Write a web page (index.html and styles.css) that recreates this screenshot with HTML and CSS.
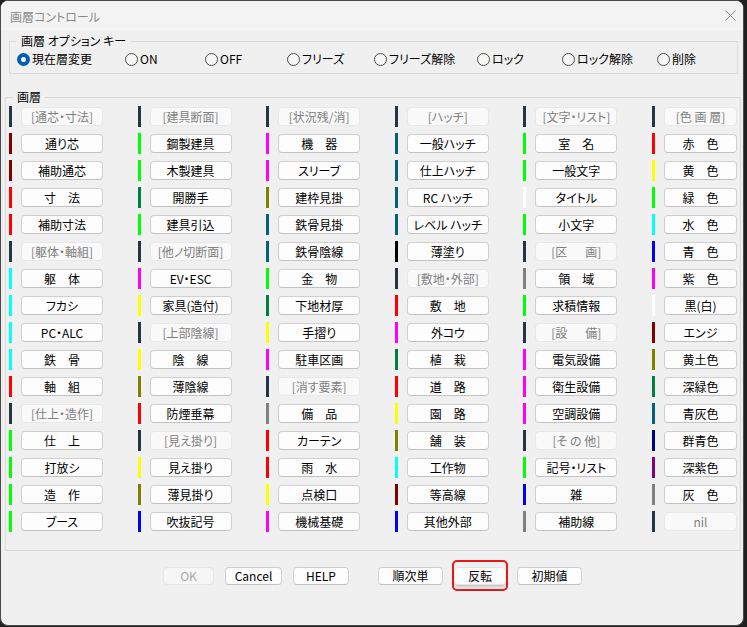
FILE: index.html
```html
<!DOCTYPE html>
<html>
<head>
    <meta charset="UTF-8">
    <title>画層コントロール</title>
    <link rel="stylesheet" href="styles.css">
</head>
<body>
    <div class="window">
        <div class="titlebar">
            <span class="title">画層コントロール</span>
            <span class="close">
                <svg width="11" height="11" viewBox="0 0 11 11"><path d="M0.5 0.5L10.5 10.5M10.5 0.5L0.5 10.5" stroke="#8a8a8a" stroke-width="1" fill="none"/></svg>
            </span>
        </div>

        <fieldset class="options">
            <legend>画層 オプション キー</legend>
            <div class="radios">
                <label class="radio"><span class="dot on"></span>現在層変更</label>
                <label class="radio"><span class="dot"></span>ON</label>
                <label class="radio"><span class="dot"></span>OFF</label>
                <label class="radio"><span class="dot"></span>フリーズ</label>
                <label class="radio"><span class="dot"></span>フリーズ解除</label>
                <label class="radio"><span class="dot"></span>ロック</label>
                <label class="radio"><span class="dot"></span>ロック解除</label>
                <label class="radio"><span class="dot"></span>削除</label>
            </div>
        </fieldset>

        <fieldset class="layers">
            <legend>画層</legend>
            <div class="cols">
                <div class="col">
                    <div class="row"><i class="bar c-dark"></i><button class="btn head">[通芯・寸法]</button></div>
                    <div class="row"><i class="bar c-maroon"></i><button class="btn">通り芯</button></div>
                    <div class="row"><i class="bar c-maroon"></i><button class="btn">補助通芯</button></div>
                    <div class="row"><i class="bar c-red"></i><button class="btn">寸　法</button></div>
                    <div class="row"><i class="bar c-red"></i><button class="btn">補助寸法</button></div>
                    <div class="row"><i class="bar c-dark"></i><button class="btn head">[躯体・軸組]</button></div>
                    <div class="row"><i class="bar c-cyan"></i><button class="btn">躯　体</button></div>
                    <div class="row"><i class="bar c-cyan"></i><button class="btn">フカシ</button></div>
                    <div class="row"><i class="bar c-cyan"></i><button class="btn">PC・ALC</button></div>
                    <div class="row"><i class="bar c-cyan"></i><button class="btn">鉄　骨</button></div>
                    <div class="row"><i class="bar c-red"></i><button class="btn">軸　組</button></div>
                    <div class="row"><i class="bar c-dark"></i><button class="btn head">[仕上・造作]</button></div>
                    <div class="row"><i class="bar c-green"></i><button class="btn">仕　上</button></div>
                    <div class="row"><i class="bar c-green"></i><button class="btn">打放シ</button></div>
                    <div class="row"><i class="bar c-green"></i><button class="btn">造　作</button></div>
                    <div class="row"><i class="bar c-green"></i><button class="btn">ブース</button></div>
                </div>
                <div class="col">
                    <div class="row"><i class="bar c-dark"></i><button class="btn head">[建具断面]</button></div>
                    <div class="row"><i class="bar c-green"></i><button class="btn">鋼製建具</button></div>
                    <div class="row"><i class="bar c-green"></i><button class="btn">木製建具</button></div>
                    <div class="row"><i class="bar c-dkgreen"></i><button class="btn">開勝手</button></div>
                    <div class="row"><i class="bar c-green"></i><button class="btn">建具引込</button></div>
                    <div class="row"><i class="bar c-dark"></i><button class="btn head">[他ノ切断面]</button></div>
                    <div class="row"><i class="bar c-magenta"></i><button class="btn">EV・ESC</button></div>
                    <div class="row"><i class="bar c-yellow"></i><button class="btn">家具(造付)</button></div>
                    <div class="row"><i class="bar c-dark"></i><button class="btn head">[上部陰線]</button></div>
                    <div class="row"><i class="bar c-yellow"></i><button class="btn">陰　線</button></div>
                    <div class="row"><i class="bar c-olive"></i><button class="btn">薄陰線</button></div>
                    <div class="row"><i class="bar c-red"></i><button class="btn">防煙垂幕</button></div>
                    <div class="row"><i class="bar c-dark"></i><button class="btn head">[見え掛り]</button></div>
                    <div class="row"><i class="bar c-yellow"></i><button class="btn">見え掛り</button></div>
                    <div class="row"><i class="bar c-olive"></i><button class="btn">薄見掛り</button></div>
                    <div class="row"><i class="bar c-blue"></i><button class="btn">吹抜記号</button></div>
                </div>
                <div class="col">
                    <div class="row"><i class="bar c-dark"></i><button class="btn head">[状況残/消]</button></div>
                    <div class="row"><i class="bar c-magenta"></i><button class="btn">機　器</button></div>
                    <div class="row"><i class="bar c-magenta"></i><button class="btn">スリーブ</button></div>
                    <div class="row"><i class="bar c-olive"></i><button class="btn">建枠見掛</button></div>
                    <div class="row"><i class="bar c-teal"></i><button class="btn">鉄骨見掛</button></div>
                    <div class="row"><i class="bar c-teal"></i><button class="btn">鉄骨陰線</button></div>
                    <div class="row"><i class="bar c-green"></i><button class="btn">金　物</button></div>
                    <div class="row"><i class="bar c-dkgreen"></i><button class="btn">下地材厚</button></div>
                    <div class="row"><i class="bar c-yellow"></i><button class="btn">手摺り</button></div>
                    <div class="row"><i class="bar c-magenta"></i><button class="btn">駐車区画</button></div>
                    <div class="row"><i class="bar c-dark"></i><button class="btn head">[消す要素]</button></div>
                    <div class="row"><i class="bar c-gray"></i><button class="btn">備　品</button></div>
                    <div class="row"><i class="bar c-red"></i><button class="btn">カーテン</button></div>
                    <div class="row"><i class="bar c-red"></i><button class="btn">雨　水</button></div>
                    <div class="row"><i class="bar c-yellow"></i><button class="btn">点検口</button></div>
                    <div class="row"><i class="bar c-magenta"></i><button class="btn">機械基礎</button></div>
                </div>
                <div class="col">
                    <div class="row"><i class="bar c-dark"></i><button class="btn head">[ハッチ]</button></div>
                    <div class="row"><i class="bar c-teal"></i><button class="btn">一般ハッチ</button></div>
                    <div class="row"><i class="bar c-teal"></i><button class="btn">仕上ハッチ</button></div>
                    <div class="row"><i class="bar c-teal"></i><button class="btn">RC ハッチ</button></div>
                    <div class="row"><i class="bar c-teal"></i><button class="btn">レベル ハッチ</button></div>
                    <div class="row"><i class="bar c-black"></i><button class="btn">薄塗り</button></div>
                    <div class="row"><i class="bar c-dark"></i><button class="btn head">[敷地・外部]</button></div>
                    <div class="row"><i class="bar c-red"></i><button class="btn">敷　地</button></div>
                    <div class="row"><i class="bar c-magenta"></i><button class="btn">外コウ</button></div>
                    <div class="row"><i class="bar c-dkgreen"></i><button class="btn">植　栽</button></div>
                    <div class="row"><i class="bar c-red"></i><button class="btn">道　路</button></div>
                    <div class="row"><i class="bar c-yellow"></i><button class="btn">園　路</button></div>
                    <div class="row"><i class="bar c-olive"></i><button class="btn">舗　装</button></div>
                    <div class="row"><i class="bar c-cyan"></i><button class="btn">工作物</button></div>
                    <div class="row"><i class="bar c-maroon"></i><button class="btn">等高線</button></div>
                    <div class="row"><i class="bar c-blue"></i><button class="btn">其他外部</button></div>
                </div>
                <div class="col">
                    <div class="row"><i class="bar c-dark"></i><button class="btn head">[文字・リスト]</button></div>
                    <div class="row"><i class="bar c-green"></i><button class="btn">室　名</button></div>
                    <div class="row"><i class="bar c-green"></i><button class="btn">一般文字</button></div>
                    <div class="row"><i class="bar c-white"></i><button class="btn">タイトル</button></div>
                    <div class="row"><i class="bar c-green"></i><button class="btn">小文字</button></div>
                    <div class="row"><i class="bar c-dark"></i><button class="btn head">[区　&ensp;画]</button></div>
                    <div class="row"><i class="bar c-gray"></i><button class="btn">領　域</button></div>
                    <div class="row"><i class="bar c-green"></i><button class="btn">求積情報</button></div>
                    <div class="row"><i class="bar c-dark"></i><button class="btn head">[設　&ensp;備]</button></div>
                    <div class="row"><i class="bar c-magenta"></i><button class="btn">電気設備</button></div>
                    <div class="row"><i class="bar c-magenta"></i><button class="btn">衛生設備</button></div>
                    <div class="row"><i class="bar c-magenta"></i><button class="btn">空調設備</button></div>
                    <div class="row"><i class="bar c-dark"></i><button class="btn head">[そ の 他]</button></div>
                    <div class="row"><i class="bar c-green"></i><button class="btn">記号・リスト</button></div>
                    <div class="row"><i class="bar c-blue"></i><button class="btn">雑</button></div>
                    <div class="row"><i class="bar c-gray"></i><button class="btn">補助線</button></div>
                </div>
                <div class="col">
                    <div class="row"><i class="bar c-dark"></i><button class="btn head">[色 画 層]</button></div>
                    <div class="row"><i class="bar c-red"></i><button class="btn">赤　色</button></div>
                    <div class="row"><i class="bar c-yellow"></i><button class="btn">黄　色</button></div>
                    <div class="row"><i class="bar c-green"></i><button class="btn">緑　色</button></div>
                    <div class="row"><i class="bar c-cyan"></i><button class="btn">水　色</button></div>
                    <div class="row"><i class="bar c-blue"></i><button class="btn">青　色</button></div>
                    <div class="row"><i class="bar c-magenta"></i><button class="btn">紫　色</button></div>
                    <div class="row"><i class="bar c-white"></i><button class="btn">黒(白)</button></div>
                    <div class="row"><i class="bar c-maroon"></i><button class="btn">エンジ</button></div>
                    <div class="row"><i class="bar c-olive"></i><button class="btn">黄土色</button></div>
                    <div class="row"><i class="bar c-dkgreen"></i><button class="btn">深緑色</button></div>
                    <div class="row"><i class="bar c-teal"></i><button class="btn">青灰色</button></div>
                    <div class="row"><i class="bar c-navy"></i><button class="btn">群青色</button></div>
                    <div class="row"><i class="bar c-purple"></i><button class="btn">深紫色</button></div>
                    <div class="row"><i class="bar c-gray"></i><button class="btn">灰　色</button></div>
                    <div class="row"><i class="bar c-dark"></i><button class="btn head">nil</button></div>
                </div>
            </div>
        </fieldset>

        <div class="actions">
            <button class="btn act w-ok" disabled>OK</button>
            <button class="btn act w-cancel">Cancel</button>
            <button class="btn act w-help">HELP</button>
            <button class="btn act w-wide spaced">順次単</button>
            <button class="btn act w-rev focused">反転</button>
            <button class="btn act w-wide">初期値</button>
        </div>
    </div>
</body>
</html>
```

FILE: styles.css
```css
* {
    box-sizing: border-box;
}
body {
    margin: 0;
    background-color: #202020;
    font-family: "Noto Sans CJK JP", "Noto Sans", sans-serif;
    font-size: 12px;
    font-feature-settings: "palt";
    color: #000;
}
.window {
    width: 744px;
    height: 626px;
    background-color: #f0f0f0;
    border: 1px solid #4a4a4a;
    border-radius: 8px;
    overflow: hidden;
}
.titlebar {
    height: 30px;
    display: flex;
    align-items: center;
    justify-content: space-between;
    padding: 0 7px 0 9px;
    background-color: #f3f3f3;
}
.title {
    color: #8a8a8a;
    font-size: 12px;
}
.close {
    display: flex;
    margin-top: -2px;
}

/* option keys */
fieldset {
    min-width: 0;
    border: 1px solid #dadada;
}
legend {
    line-height: 14px;
    font-size: 12px;
}
.options {
    margin: 3px 5px 0 8px;
    padding: 4px 5px 7px 7px;
}
.options legend {
    margin-left: -1px;
    padding: 0 5px;
}
.radios {
    display: grid;
    grid-template-columns: 108px 80px 82px 87px 103px 85px 95px auto;
    height: 14px;
    align-items: center;
}
.radio {
    display: flex;
    align-items: center;
    white-space: nowrap;
    line-height: 14px;
}
.dot {
    width: 13px;
    height: 13px;
    border-radius: 50%;
    border: 1px solid #4a4a4a;
    background-color: #f7f7f7;
    margin-right: 2px;
    flex: none;
}
.dot.on {
    border: 4px solid #005fb8;
    background-color: #fff;
}

/* layer grid */
.layers {
    margin: 16px 2px 0 4px;
    padding: 2px 2px 18px 3px;
}
.layers legend {
    margin-left: 4px;
    padding: 0 4px;
}
.cols {
    display: flex;
    gap: 34.6px;
}
.col {
    display: flex;
    flex-direction: column;
    gap: 6px;
}
.row {
    display: flex;
    align-items: center;
    height: 21px;
}
.bar {
    width: 3px;
    height: 21px;
    margin-right: 9px;
    flex: none;
}
.btn {
    width: 82px;
    height: 19px;
    padding: 0;
    font-family: inherit;
    font-size: 12px;
    font-feature-settings: "palt";
    line-height: 17px;
    color: #000;
    background-color: #fdfdfd;
    border: 1px solid #d0d0d0;
    border-bottom-color: #c2c2c2;
    border-radius: 4px;
    white-space: nowrap;
}
.col:last-child .btn {
    width: 73px;
}
.btn.head {
    color: #808080;
    background-color: #f9f9f9;
    border-color: #e8e8e8;
}

.c-dark { background-color: #263447; }
.c-maroon { background-color: #800000; }
.c-red { background-color: #ff0000; }
.c-cyan { background-color: #00ffff; }
.c-green { background-color: #00ff00; }
.c-dkgreen { background-color: #008040; }
.c-magenta { background-color: #ff00ff; }
.c-yellow { background-color: #ffff00; }
.c-olive { background-color: #808000; }
.c-teal { background-color: #006080; }
.c-black { background-color: #000000; }
.c-white { background-color: #ffffff; }
.c-gray { background-color: #808080; }
.c-blue { background-color: #0000ff; }
.c-navy { background-color: #000080; }
.c-purple { background-color: #800080; }

/* dialog buttons */
.actions {
    display: flex;
    gap: 11px;
    margin: 16px 0 0 162px;
}
.act {
    height: 18px;
    line-height: 16px;
}
.act:disabled {
    color: #a8a8a8;
    background-color: #f6f6f6;
    border-color: #e6e6e6;
}
.w-ok { width: 51px; }
.w-cancel { width: 57px; }
.w-help { width: 56px; }
.w-wide { width: 65px; }
.w-rev { width: 52px; }
.spaced {
    margin-left: 18px;
}
.focused {
    position: relative;
    border-color: #e4e4e4;
    box-shadow: 0 2px 3px rgba(0, 0, 0, 0.18);
}
.focused::after {
    content: "";
    position: absolute;
    left: -3px;
    right: -3px;
    top: -8px;
    bottom: -7px;
    border: 2px solid #e81818;
    border-radius: 5px;
}
```
